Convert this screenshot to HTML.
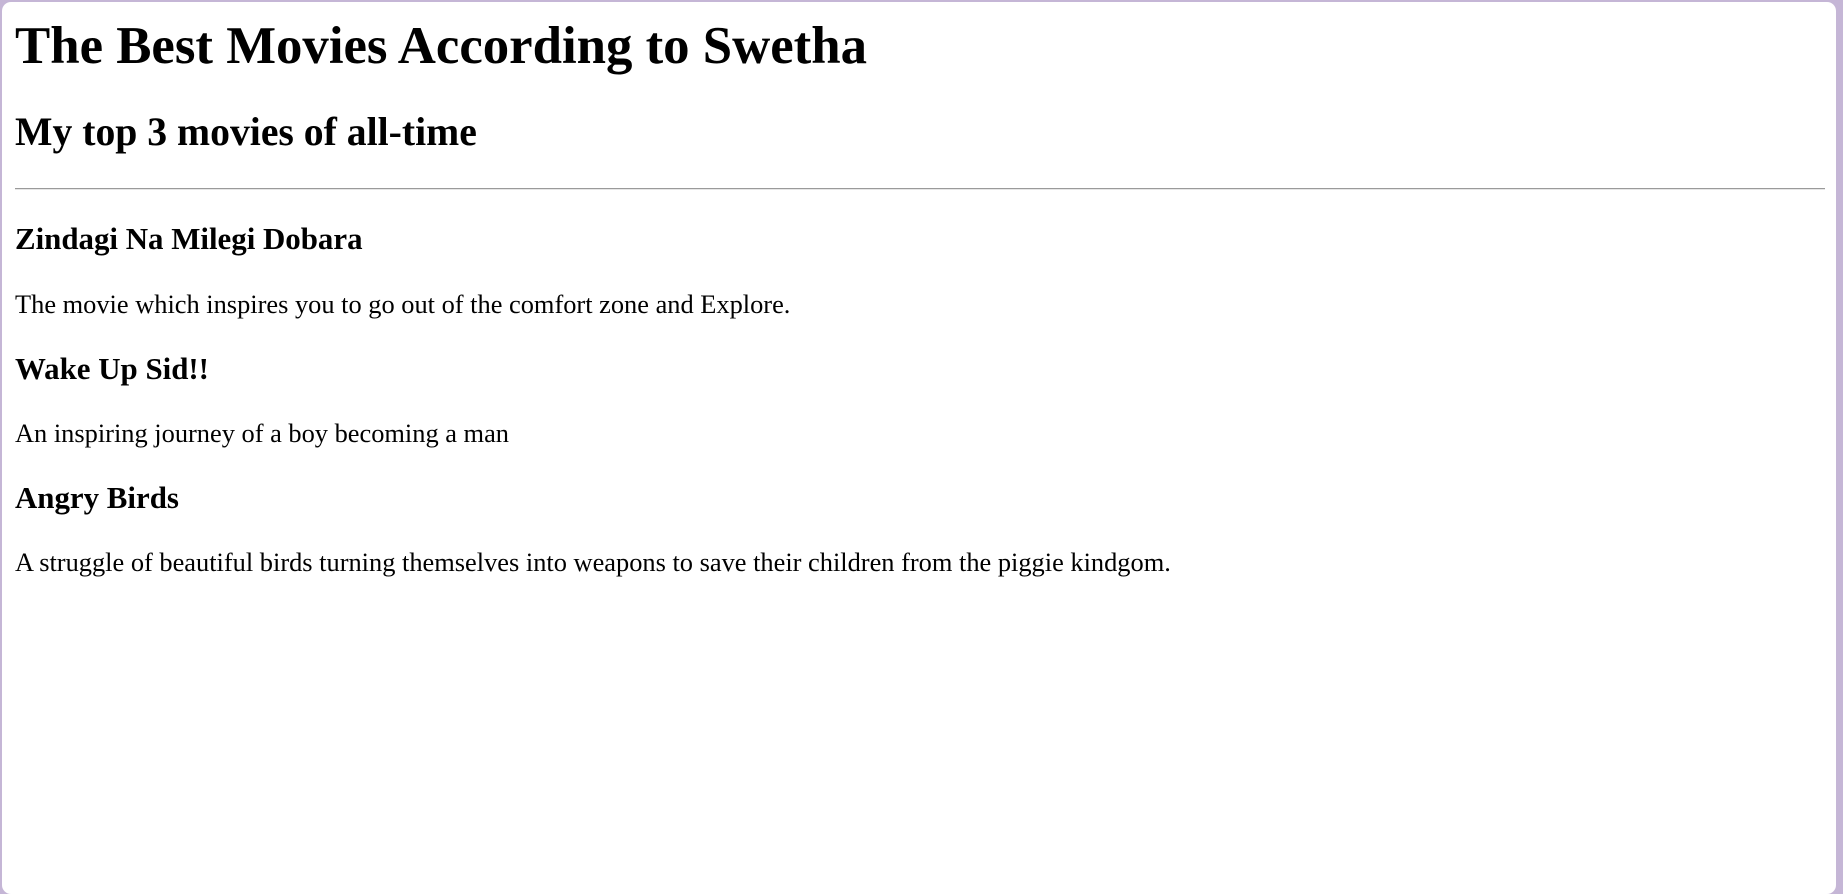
<!DOCTYPE html>
<html><head><meta charset="utf-8"><style>
html,body{margin:0;padding:0;width:1843px;height:894px;overflow:hidden;background:#c5b6d6;}
.frame{position:absolute;left:2px;top:2px;width:1834px;height:892px;background:#fff;border-radius:9px;overflow:hidden;font-family:"Liberation Serif",serif;color:#000;}
.t{position:absolute;left:13px;margin:0;white-space:nowrap;line-height:1.15;}
h1.t{font-size:52.8px;font-weight:bold;}
h2.t{font-size:39.7px;font-weight:bold;}
h3.t{font-size:30.9px;font-weight:bold;}
p.t{font-size:26.4px;}
.hr{position:absolute;left:13px;width:1810px;top:186px;height:0;border-top:1px solid #9a9a9a;border-bottom:1px solid #e6e6e6;}
</style></head><body>
<div class="frame">
<h1 class="t" style="top:14px">The Best Movies According to Swetha</h1>
<h2 class="t" style="top:108px">My top 3 movies of all-time</h2>
<div class="hr"></div>
<h3 class="t" style="top:219px">Zindagi Na Milegi Dobara</h3>
<p class="t" style="top:287px">The movie which inspires you to go out of the comfort zone and Explore.</p>
<h3 class="t" style="top:349px">Wake Up Sid!!</h3>
<p class="t" style="top:416px">An inspiring journey of a boy becoming a man</p>
<h3 class="t" style="top:478px">Angry Birds</h3>
<p class="t" style="top:545px">A struggle of beautiful birds turning themselves into weapons to save their children from the piggie kindgom.</p>
</div>
</body></html>
